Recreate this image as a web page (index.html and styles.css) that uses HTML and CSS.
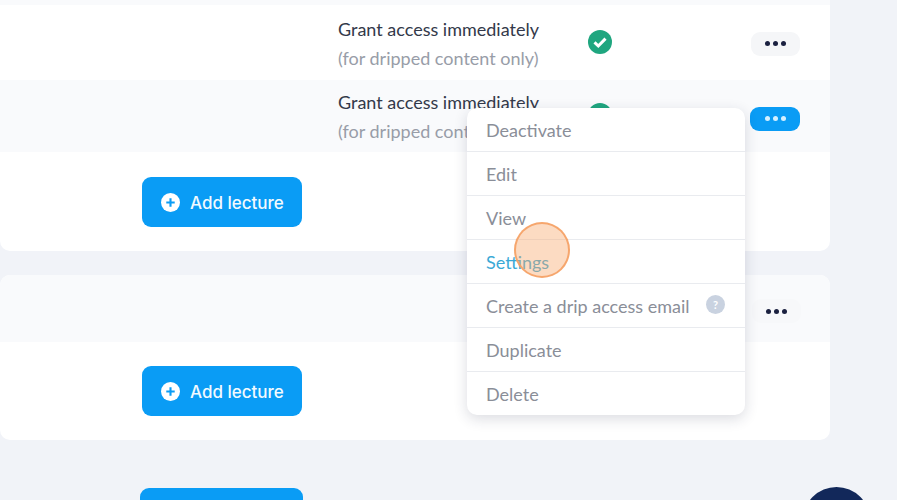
FILE: index.html
```html
<!DOCTYPE html>
<html lang="en">
<head>
    <meta charset="UTF-8">
    <meta name="viewport" content="width=device-width, initial-scale=1.0">
    <title>Lectures</title>
    <link rel="stylesheet" href="styles.css">
</head>
<body>

    <div class="screen">
        <div class="page">
            <div class="card">
                <div class="strip"></div>
                <div class="row">
                    <div class="access">
                        <p class="access-title">Grant access immediately</p>
                        <p class="access-note">(for dripped content only)</p>
                    </div>
                    <svg class="check" viewBox="0 0 24 24"><circle cx="12" cy="12" r="12" fill="#1fa67f"/><path d="M6.5 12.4l3.8 3.6 7.2-7.4" fill="none" stroke="#fff" stroke-width="3"/></svg>
                    <button class="dots"><i></i><i></i><i></i></button>
                </div>
                <div class="row row-alt row-open">
                    <div class="access">
                        <p class="access-title">Grant access immediately</p>
                        <p class="access-note">(for dripped content only)</p>
                    </div>
                    <svg class="check" viewBox="0 0 24 24"><circle cx="12" cy="12" r="12" fill="#1fa67f"/><path d="M6.5 12.4l3.8 3.6 7.2-7.4" fill="none" stroke="#fff" stroke-width="3"/></svg>
                    <button class="dots dots-active"><i></i><i></i><i></i></button>
                </div>
                <div class="card-footer">
                    <button class="add-btn">
                        <svg class="plus" viewBox="0 0 18 18"><circle cx="9" cy="9" r="9" fill="#fff"/><path d="M9 5v8M5 9h8" stroke="#0a9cf5" stroke-width="2"/></svg>
                        Add lecture
                    </button>
                </div>
            </div>

            <div class="card card-second">
                <div class="section-head">
                    <button class="dots dots-faint"><i></i><i></i><i></i></button>
                </div>
                <div class="card-footer card-footer-second">
                    <button class="add-btn">
                        <svg class="plus" viewBox="0 0 18 18"><circle cx="9" cy="9" r="9" fill="#fff"/><path d="M9 5v8M5 9h8" stroke="#0a9cf5" stroke-width="2"/></svg>
                        Add lecture
                    </button>
                </div>
            </div>

            <div class="bottom-btn"></div>
        </div>

        <ul class="menu">
            <li>Deactivate</li>
            <li>Edit</li>
            <li>View</li>
            <li class="menu-hover">Settings</li>
            <li class="menu-help">Create a drip access email <span class="help">?</span></li>
            <li>Duplicate</li>
            <li>Delete</li>
        </ul>

        <div class="click-mark"></div>
        <div class="chat-bubble"></div>
    </div>

</body>
</html>
```

FILE: styles.css
```css
body {
    font-family: 'Lato', 'Open Sans', sans-serif;
    background: #f1f3f8;
    margin: 0;
    padding: 0;
}

p {
    margin: 0;
}

.screen {
    position: relative;
    height: 500px;
    overflow: hidden;
}

.page {
    width: 830px;
}

.card {
    background: #fff;
    border-radius: 0 0 10px 10px;
    overflow: hidden;
}

.card-second {
    margin-top: 24px;
    border-radius: 10px;
}

.strip {
    height: 5px;
    background: #f9fafc;
}

.row {
    display: grid;
    grid-template-columns: 250px 24px auto;
    align-items: center;
    height: 75px;
    padding-left: 338px;
    box-sizing: border-box;
}

.row-alt {
    height: 72px;
    background: #f9fafc;
}

.access {
    padding-top: 2px;
}

.access-title {
    font-size: 18px;
    line-height: 29px;
    color: #33394a;
}

.access-note {
    font-size: 18px;
    line-height: 29px;
    color: #989da8;
}

.check {
    width: 24px;
    height: 24px;
    margin-top: -1px;
}

.row-open .check {
    margin-top: -3px;
}

.dots {
    display: flex;
    align-items: center;
    justify-content: center;
    gap: 3px;
    width: 49px;
    height: 24px;
    margin-left: 139px;
    margin-top: 2px;
    padding: 0;
    border: none;
    border-radius: 9px;
    background: #f5f6f8;
}

.dots i {
    width: 5px;
    height: 5px;
    border-radius: 50%;
    background: #1b2140;
}

.dots-active {
    width: 50px;
    margin-left: 138px;
    margin-top: 5px;
    background: #0a9cf5;
}

.dots-active i {
    background: #d5f0ff;
}

.dots-faint {
    background: #f7f8fa;
}

.card-footer {
    display: flex;
    height: 99px;
    padding: 25px 0 0 142px;
    box-sizing: border-box;
}

.card-footer-second {
    height: 98px;
    padding-top: 24px;
}

.section-head {
    display: flex;
    justify-content: flex-end;
    align-items: center;
    height: 67px;
    padding-right: 29px;
    background: #f9fafc;
}

.section-head .dots {
    margin: 5px 0 0;
}

.add-btn {
    display: flex;
    align-items: center;
    gap: 10px;
    width: 160px;
    height: 50px;
    padding: 1px 0 0 19px;
    border: none;
    border-radius: 9px;
    background: #0a9cf5;
    color: #f2faff;
    font-family: 'Inter', sans-serif;
    font-size: 17px;
    font-weight: 500;
}

.plus {
    width: 19px;
    height: 19px;
    margin-top: -1px;
}

.bottom-btn {
    width: 163px;
    height: 50px;
    margin: 48px 0 0 140px;
    border-radius: 9px;
    background: #0a9cf5;
}

.menu {
    position: absolute;
    left: 467px;
    top: 108px;
    width: 278px;
    margin: 0;
    padding: 0;
    list-style: none;
    background: #fff;
    border-radius: 10px;
    box-shadow: 0 4px 14px rgba(30, 40, 70, 0.16);
}

.menu li {
    display: flex;
    align-items: center;
    justify-content: space-between;
    height: 44px;
    padding: 0 20px 0 19px;
    box-sizing: border-box;
    border-bottom: 1px solid #e9ebef;
    font-size: 18px;
    color: #8a8e98;
}

.menu li:last-child {
    height: 43px;
    border-bottom: none;
}

.menu .menu-hover {
    color: #3aa9d6;
}

.help {
    display: flex;
    align-items: center;
    justify-content: center;
    width: 19px;
    height: 19px;
    margin-top: -2px;
    border-radius: 50%;
    background: #c9d2e0;
    color: #fff;
    font-size: 11px;
    font-weight: 700;
}

.click-mark {
    position: absolute;
    left: 514px;
    top: 222px;
    width: 56px;
    height: 56px;
    box-sizing: border-box;
    border-radius: 50%;
    border: 2px solid rgba(245, 160, 100, 0.9);
    background: rgba(248, 170, 110, 0.42);
}

.chat-bubble {
    position: absolute;
    left: 803px;
    top: 487px;
    width: 67px;
    height: 67px;
    border-radius: 50%;
    background: #12285a;
}
```
